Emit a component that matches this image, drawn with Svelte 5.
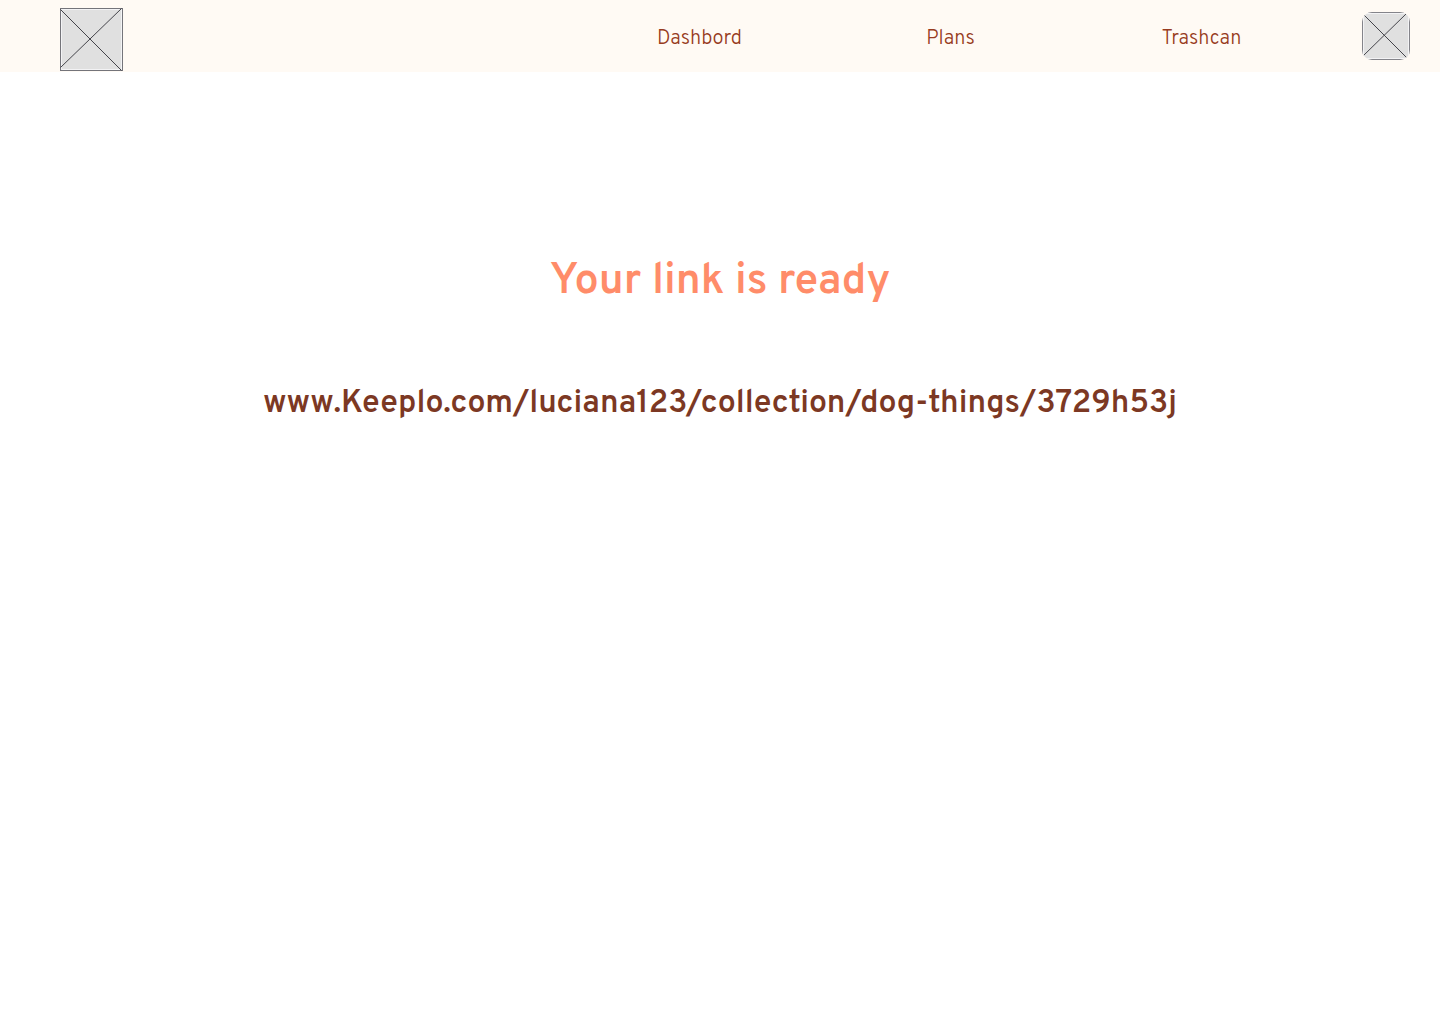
<script>
  const links = [
    { label: 'Dashbord', href: '#dashboard' },
    { label: 'Plans', href: '#plans' },
    { label: 'Trashcan', href: '#trashcan' }
  ];
</script>

<header>
  <a class="logo" href="#home" aria-label="Home">
    <svg viewBox="0 0 63 63" aria-hidden="true">
      <rect x="0.5" y="0.5" width="62" height="62" fill="#e0e0e0" stroke="#74747a" />
      <path d="M1.5 61.5V1.5H61.5V61.5Z" fill="none" stroke="#f3f3f5" />
      <path d="M0.5 1.5L61.5 62.5M0.5 59.5L61.5 0.5" fill="none" stroke="#44444a" />
    </svg>
  </a>
  <nav>
    {#each links as link}
      <a href={link.href}>{link.label}</a>
    {/each}
  </nav>
  <button class="avatar" type="button" aria-label="Account">
    <svg viewBox="0 0 48 48" aria-hidden="true">
      <rect x="0.5" y="0.5" width="47" height="47" fill="#e0e0e0" stroke="#84848a" />
      <path d="M1.5 46.5V1.5H46.5V46.5Z" fill="none" stroke="#f3f3f5" />
      <path d="M1.5 2.5L44.5 45.5M1.5 43.5L44.5 1.5" fill="none" stroke="#44444a" />
    </svg>
  </button>
</header>

<main>
  <h1>Your link is ready</h1>
  <a class="share" href="#share">www.Keeplo.com/luciana123/collection/dog-things/3729h53j</a>
</main>

<style>
  :global(body) {
    margin: 0;
    background: #fff;
    font-family: Overpass, Roboto, sans-serif;
  }
  header {
    box-sizing: border-box;
    min-height: 72px;
    padding: 0 30px 0 60px;
    display: flex;
    align-items: center;
    gap: 35px;
    background: #fffaf4;
  }
  .logo {
    width: 63px;
    height: 63px;
    flex: none;
    align-self: flex-end;
    margin: 8px auto 1px 0;
  }
  svg {
    display: block;
    width: 100%;
    height: 100%;
  }
  nav {
    flex: 0 1 753px;
    display: grid;
    grid-template-columns: repeat(3, 1fr);
    padding-top: 6px;
    text-align: center;
  }
  nav a {
    font-size: 20px;
    line-height: 24px;
    font-weight: 300;
    color: #973b20;
    text-decoration: none;
  }
  .avatar {
    width: 48px;
    height: 48px;
    flex: none;
    padding: 0;
    border: 0;
    border-radius: 10px;
    overflow: hidden;
    background: none;
  }
  main {
    display: flex;
    flex-direction: column;
    align-items: center;
    gap: 73px;
    padding: 183px 24px;
    text-align: center;
  }
  h1 {
    margin: 0;
    font-size: 43px;
    line-height: 54px;
    font-weight: 600;
    color: #ff8c69;
  }
  .share {
    font-size: 32px;
    line-height: 44px;
    font-weight: 600;
    color: #7c3823;
    text-decoration: none;
    overflow-wrap: anywhere;
  }
</style>
